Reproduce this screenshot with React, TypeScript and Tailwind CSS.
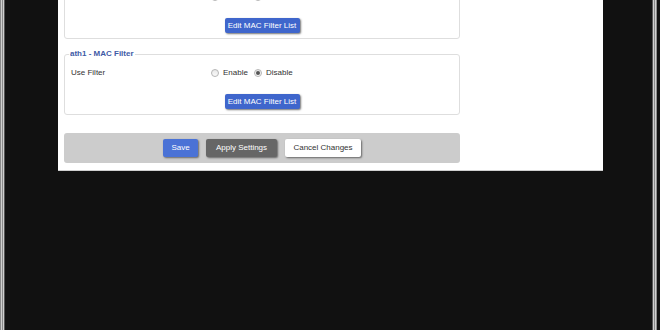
function Radio({ checked, label }: { checked?: boolean; label: string }) {
  return (
    <label className="flex items-center gap-[4px]">
      <span className="w-[8px] h-[8px] rounded-full border border-[#b5b5b5] bg-gradient-to-b from-[#e8e8e8] to-[#fafafa] flex items-center justify-center">
        {checked && <span className="w-[4px] h-[4px] rounded-full bg-[#555]" />}
      </span>
      <span>{label}</span>
    </label>
  )
}

function EditButton() {
  return (
    <div className="flex justify-center">
      <button className="h-[15px] w-[75px] bg-[#3f66cc] text-white rounded-[2px] shadow-[1px_1px_2px_rgba(0,0,0,0.55)] text-[8px] leading-none">
        Edit MAC Filter List
      </button>
    </div>
  )
}

function FilterFieldset({ title }: { title: string }) {
  return (
    <fieldset className="border border-[#dedede] rounded-[3px] px-[6px] pb-[5px]">
      <legend className="ml-[-2px] px-[1px] text-[8px] leading-[10px] font-bold text-[#3e5aa6]">{title}</legend>
      <div className="flex items-center h-[10px] mt-[9px]">
        <span className="w-[140px]">Use Filter</span>
        <div className="flex items-center gap-[6px]">
          <Radio label="Enable" />
          <Radio checked label="Disable" />
        </div>
      </div>
      <div className="mt-[16px]">
        <EditButton />
      </div>
    </fieldset>
  )
}

export default function App() {
  return (
    <div
      className="w-[660px] h-[330px] bg-[#111111] flex overflow-hidden text-[8px] text-[#333]"
      style={{ fontFamily: '"Liberation Sans", Arial, sans-serif' }}
    >
      <div className="flex h-full">
        <div className="w-px bg-[#8a8a8a]" />
        <div className="w-px bg-[#cfcfcf]" />
        <div className="w-px bg-[#8a8a8a]" />
        <div className="w-px bg-[#cfcfcf]" />
        <div className="w-px bg-[#555]" />
      </div>
      <div className="ml-[53px] w-[545px] self-start bg-white border-b border-[#cfcfcf] px-[6px] pb-[7px] overflow-hidden">
        <div className="w-[396px] mt-[-27px]">
          <FilterFieldset title="ath0 - MAC Filter" />
          <div className="mt-[10px]">
            <FilterFieldset title="ath1 - MAC Filter" />
          </div>
          <div className="mt-[18px] h-[30px] bg-[#cccccc] rounded-[3px] flex items-center justify-center gap-[8px]">
            <button className="h-[18px] w-[35px] bg-[#4a72d6] text-white rounded-[2px] shadow-[1px_1px_2px_rgba(0,0,0,0.5)]">
              Save
            </button>
            <button className="h-[18px] w-[71px] bg-[#666666] text-white rounded-[2px] shadow-[1px_1px_2px_rgba(0,0,0,0.5)]">
              Apply Settings
            </button>
            <button className="h-[18px] w-[76px] bg-white text-[#333] rounded-[2px] shadow-[1px_1px_2px_rgba(0,0,0,0.5)]">
              Cancel Changes
            </button>
          </div>
        </div>
      </div>
      <div className="ml-[49px] flex h-full">
        <div className="w-px bg-[#555]" />
        <div className="w-px bg-[#cfcfcf]" />
        <div className="w-px bg-[#8a8a8a]" />
        <div className="w-px bg-[#cfcfcf]" />
        <div className="w-px bg-[#8a8a8a]" />
      </div>
    </div>
  )
}
